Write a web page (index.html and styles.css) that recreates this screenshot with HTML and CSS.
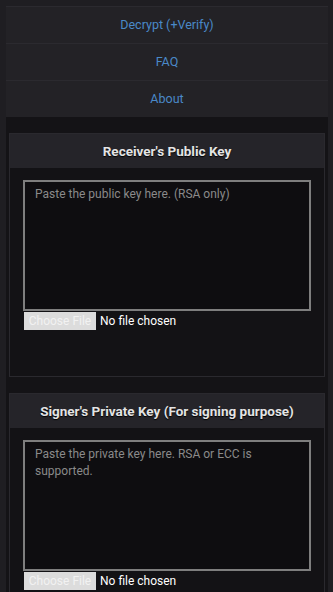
FILE: index.html
```html
<!DOCTYPE html>
<html lang="en">
<head>
    <meta charset="UTF-8">
    <meta name="viewport" content="width=device-width, initial-scale=1.0">
    <title>PGP Tool</title>
    <link rel="stylesheet" href="styles.css">
</head>
<body>
    <ul class="nav">
        <li><a href="#">Decrypt (+Verify)</a></li>
        <li><a href="#">FAQ</a></li>
        <li><a href="#">About</a></li>
    </ul>
    <div class="main">
        <div class="panel">
            <div class="panel-heading">Receiver's Public Key</div>
            <div class="panel-body">
                <textarea class="key-input" placeholder="Paste the public key here. (RSA only)"></textarea>
                <input type="file" class="key-file">
            </div>
        </div>
        <div class="panel">
            <div class="panel-heading">Signer's Private Key (For signing purpose)</div>
            <div class="panel-body">
                <textarea class="key-input" placeholder="Paste the private key here. RSA or ECC is supported."></textarea>
                <input type="file" class="key-file">
            </div>
        </div>
    </div>
</body>
</html>
```

FILE: styles.css
```css
body {
    margin: 0;
    padding: 6px 5px 0 6px;
    background-color: #1f1e22;
    font-family: Roboto, "Noto Sans", sans-serif;
    color: #e6e6e6;
}
.nav {
    list-style: none;
    margin: 0;
    padding: 0;
    border-top: 1px solid #2b2a2f;
}
.nav li {
    background-color: #232226;
    border-bottom: 1px solid #2b2a2f;
}
.nav li:last-child {
    border-bottom: none;
}
.nav a {
    display: block;
    height: 36px;
    line-height: 36px;
    text-align: center;
    color: #4a89c8;
    font-size: 12.5px;
    text-decoration: none;
}
.main {
    background-color: #141316;
    padding: 16px 3px 1px 3px;
}
.panel {
    border: 1px solid #2a292e;
    background-color: #131215;
    margin-bottom: 16px;
}
.panel-heading {
    height: 34px;
    line-height: 34px;
    background-color: #252429;
    text-align: center;
    font-weight: bold;
    font-size: 13.5px;
    color: #e4e4e4;
    text-shadow: 0 1px 1px #000;
}
.panel-body {
    padding: 12px 13px 46px 13px;
}
.key-input {
    display: block;
    box-sizing: border-box;
    width: 100%;
    height: 131px;
    margin: 0;
    padding: 4px 10px;
    background-color: #0e0d10;
    border: 2px solid #7e7e7e;
    color: #ddd;
    font-family: Roboto, "Noto Sans", sans-serif;
    font-size: 12px;
    line-height: 17px;
    resize: none;
}
.key-input::placeholder {
    color: #8a8a8a;
}
.key-file {
    display: block;
    margin: 1px 0 0 1px;
    height: 18px;
    color: #fff;
    font-family: Roboto, "Noto Sans", sans-serif;
    font-size: 12px;
}
.key-file::file-selector-button {
    width: 72px;
    height: 18px;
    margin: 0 4px 0 0;
    padding: 0;
    border: none;
    background-color: #dcdcdc;
    color: #f2f2f2;
    font-family: Roboto, "Noto Sans", sans-serif;
    font-size: 12px;
}
```
